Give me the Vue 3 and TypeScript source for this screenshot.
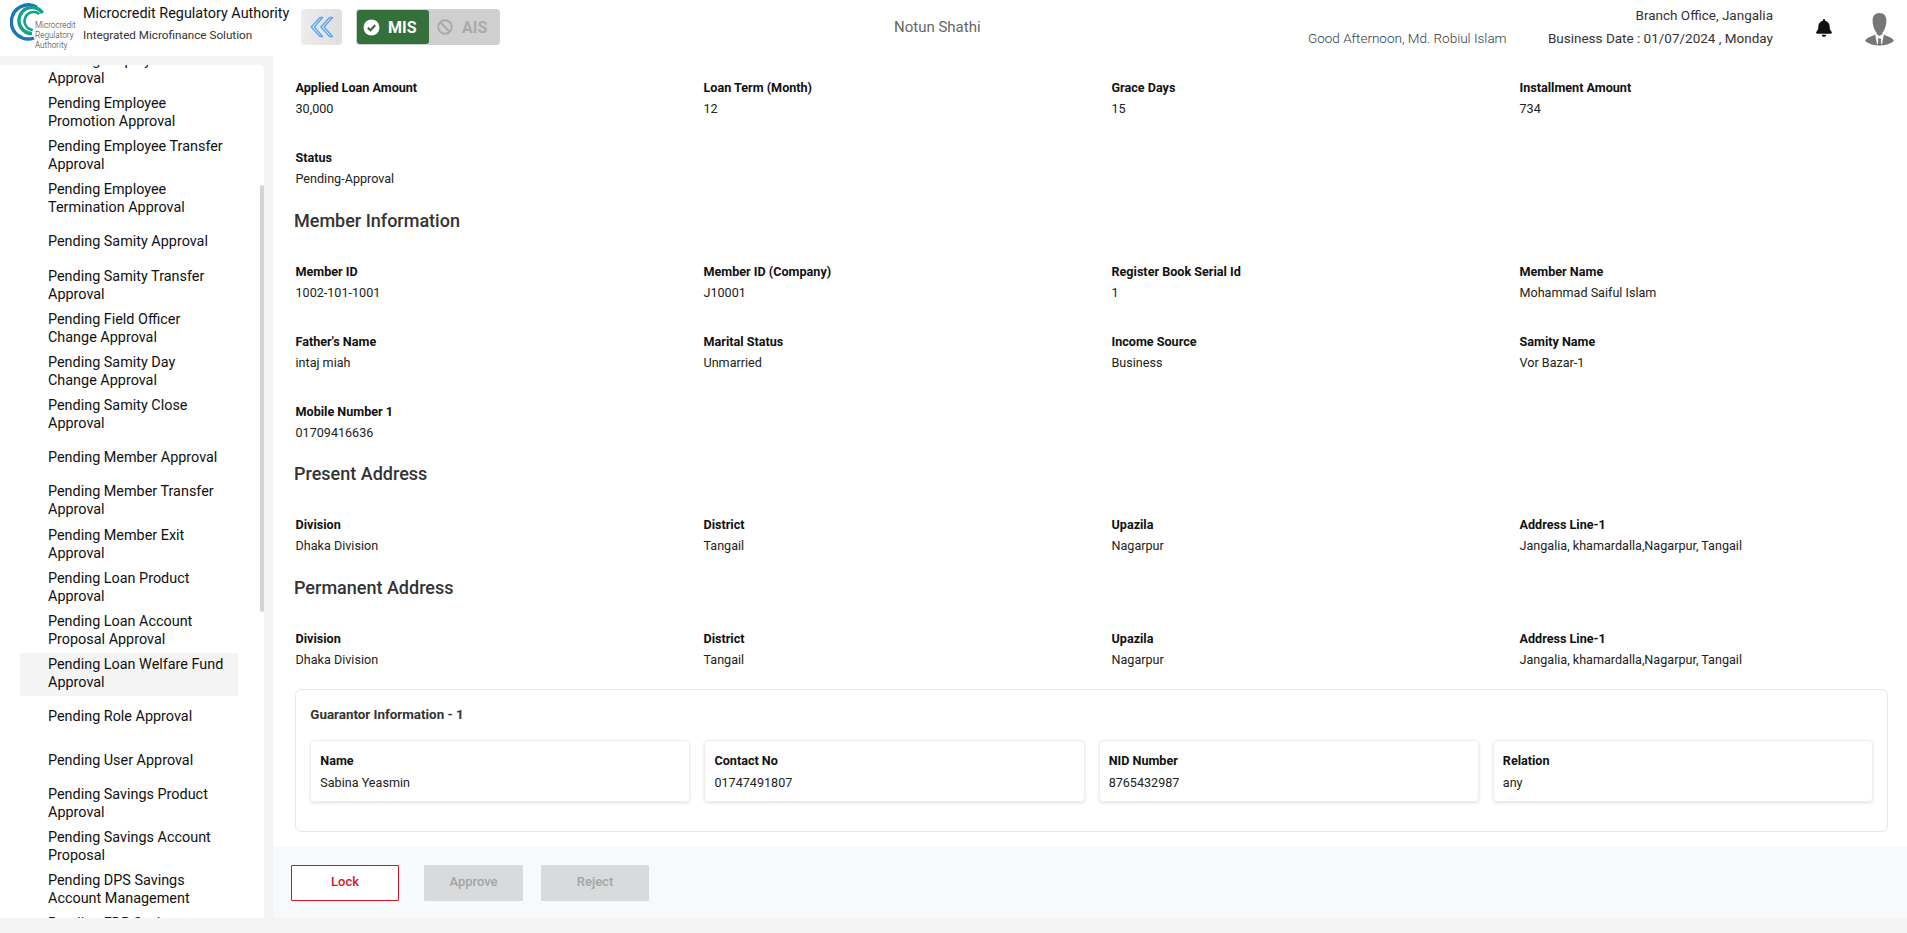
<script setup lang="ts">
interface Field { label: string; value: string }
interface Section { title?: string; rows: Field[] }

const menu: string[][] = [
  ['Pending Employee', 'Approval'],
  ['Pending Employee', 'Promotion Approval'],
  ['Pending Employee Transfer', 'Approval'],
  ['Pending Employee', 'Termination Approval'],
  ['Pending Samity Approval'],
  ['Pending Samity Transfer', 'Approval'],
  ['Pending Field Officer', 'Change Approval'],
  ['Pending Samity Day', 'Change Approval'],
  ['Pending Samity Close', 'Approval'],
  ['Pending Member Approval'],
  ['Pending Member Transfer', 'Approval'],
  ['Pending Member Exit', 'Approval'],
  ['Pending Loan Product', 'Approval'],
  ['Pending Loan Account', 'Proposal Approval'],
  ['Pending Loan Welfare Fund', 'Approval'],
  ['Pending Role Approval'],
  ['Pending User Approval'],
  ['Pending Savings Product', 'Approval'],
  ['Pending Savings Account', 'Proposal'],
  ['Pending DPS Savings', 'Account Management'],
  ['Pending FDR Savings', 'Approval'],
]
const activeIndex = 14

const sections: Section[] = [
  {
    rows: [
      { label: 'Applied Loan Amount', value: '30,000' },
      { label: 'Loan Term (Month)', value: '12' },
      { label: 'Grace Days', value: '15' },
      { label: 'Installment Amount', value: '734' },
      { label: 'Status', value: 'Pending-Approval' },
    ],
  },
  {
    title: 'Member Information',
    rows: [
      { label: 'Member ID', value: '1002-101-1001' },
      { label: 'Member ID (Company)', value: 'J10001' },
      { label: 'Register Book Serial Id', value: '1' },
      { label: 'Member Name', value: 'Mohammad Saiful Islam' },
      { label: "Father's Name", value: 'intaj miah' },
      { label: 'Marital Status', value: 'Unmarried' },
      { label: 'Income Source', value: 'Business' },
      { label: 'Samity Name', value: 'Vor Bazar-1' },
      { label: 'Mobile Number 1', value: '01709416636' },
    ],
  },
  {
    title: 'Present Address',
    rows: [
      { label: 'Division', value: 'Dhaka Division' },
      { label: 'District', value: 'Tangail' },
      { label: 'Upazila', value: 'Nagarpur' },
      { label: 'Address Line-1', value: 'Jangalia, khamardalla,Nagarpur, Tangail' },
    ],
  },
  {
    title: 'Permanent Address',
    rows: [
      { label: 'Division', value: 'Dhaka Division' },
      { label: 'District', value: 'Tangail' },
      { label: 'Upazila', value: 'Nagarpur' },
      { label: 'Address Line-1', value: 'Jangalia, khamardalla,Nagarpur, Tangail' },
    ],
  },
]

const guarantor: Field[] = [
  { label: 'Name', value: 'Sabina Yeasmin' },
  { label: 'Contact No', value: '01747491807' },
  { label: 'NID Number', value: '8765432987' },
  { label: 'Relation', value: 'any' },
]
</script>

<template>
  <div class="page">
    <header class="topbar">
      <div class="brand">
        <svg class="logo" width="66" height="50" viewBox="0 0 66 50">
          <path d="M27 5.300A17 17 0 1 0 24 36" fill="none" stroke="#1b75bb" stroke-width="3.400" />
          <path d="M32.600 11A13 13 0 1 0 22 31.500" fill="none" stroke="#12a38c" stroke-width="3.500" />
          <path d="M29.300 12.100A9 9 0 1 0 22.700 28" fill="none" stroke="#12a38c" stroke-width="2.600" />
          <text x="25" y="25.500" class="logo-text">Microcredit</text>
          <text x="25" y="35.500" class="logo-text">Regulatory</text>
          <text x="25" y="45.500" class="logo-text">Authority</text>
        </svg>
        <div class="brand-text">
          <div class="brand-title">Microcredit Regulatory Authority</div>
          <div class="brand-sub">Integrated Microfinance Solution</div>
        </div>
      </div>

      <button class="collapse" type="button" aria-label="Collapse menu">
        <svg width="24" height="22" viewBox="0 0 24 22" fill="none" stroke="#5ba4f4" stroke-width="1.300" stroke-linejoin="round">
          <path d="M10 1.500 1.200 11 10 20.500h2.600L4.400 11l8.200-9.500z" />
          <path d="M19.600 1.500 10.800 11l8.800 9.500h3L14 11l8.600-9.500z" />
        </svg>
      </button>

      <div class="switch">
        <div class="switch-on">
          <svg width="17" height="17" viewBox="0 0 17 17">
            <circle cx="8.500" cy="8.500" r="8" fill="#fff" />
            <path d="M4.800 8.800 7.400 11.300 12.200 6.200" fill="none" stroke="#33703a" stroke-width="2.200" />
          </svg>
          <span>MIS</span>
        </div>
        <div class="switch-off">
          <svg width="16" height="16" viewBox="0 0 16 16" fill="none" stroke="#aaa" stroke-width="2">
            <circle cx="8" cy="8" r="6.800" />
            <path d="M3.300 3.300 12.700 12.700" />
          </svg>
          <span>AIS</span>
        </div>
      </div>

      <div class="org">Notun Shathi</div>
      <div class="greeting">Good Afternoon, Md. Robiul Islam</div>
      <div class="office">
        <div>Branch Office, Jangalia</div>
        <div>Business Date : 01/07/2024 , Monday</div>
      </div>

      <svg class="bell" width="16" height="18" viewBox="0 0 448 512">
        <path fill="#111" d="M224 512c35.320 0 63.970-28.650 63.970-64H160.030c0 35.350 28.650 64 63.970 64zm215.390-149.710c-19.320-20.760-55.470-51.990-55.470-154.290 0-77.700-54.480-139.900-127.940-155.160V32c0-17.670-14.320-32-31.980-32s-31.980 14.330-31.980 32v20.840C118.560 68.100 64.080 130.300 64.080 208c0 102.300-36.150 133.530-55.470 154.290-6 6.450-8.660 14.160-8.610 21.710.11 16.400 12.980 32 32.100 32h383.800c19.120 0 32-15.600 32.100-32 .05-7.550-2.610-15.270-8.610-21.710z" />
      </svg>
      <svg class="avatar" width="29" height="33" viewBox="0 0 29 33">
        <path fill="#777" d="M14.500 0C10 0 7.600 3 7.600 7.500c0 3 .6 5.400 1.400 7.600.7 2 1.700 3.600 2.600 4.600v1.200L14.500 23l2.900-2.100v-1.200c.9-1 1.900-2.600 2.600-4.600.8-2.200 1.400-4.600 1.400-7.600C21.400 3 19 0 14.500 0z" />
        <path fill="#777" d="M10.500 21.500 3.500 24.500C1.800 25.300.7 26.500 0 28c4 3 9 4.600 14.500 4.600S25 31 29 28c-.7-1.500-1.800-2.700-3.500-3.500l-7-3-4 5z" />
        <path fill="#fff" d="M11 21.300 14.500 25l3.500-3.700.8.400-1.800 9.500h-5l-1.800-9.500z" />
        <path fill="#777" d="M13.300 25.500h2.400l.6 1-.6 1 .7 4.200-1.900.9-1.900-.9.700-4.200-.6-1z" />
      </svg>
    </header>

    <div class="body">
      <aside class="side">
        <div class="side-card">
          <ul class="menu">
            <li v-for="(item, i) in menu" :key="i" class="menu-item" :class="{ active: i === activeIndex }">
              <span v-for="line in item" :key="line" class="menu-line">{{ line }}</span>
            </li>
          </ul>
          <div class="thumb"></div>
        </div>
      </aside>

      <main class="main">
        <div class="content">
          <section v-for="(section, s) in sections" :key="s" class="section">
            <h2 v-if="section.title" class="section-title">{{ section.title }}</h2>
            <div class="grid">
              <div v-for="field in section.rows" :key="field.label" class="field">
                <div class="label">{{ field.label }}</div>
                <div class="value">{{ field.value }}</div>
              </div>
            </div>
          </section>

          <section class="guarantor">
            <h3 class="guarantor-title">Guarantor Information - 1</h3>
            <div class="guarantor-grid">
              <div v-for="field in guarantor" :key="field.label" class="guarantor-card">
                <div class="label">{{ field.label }}</div>
                <div class="value">{{ field.value }}</div>
              </div>
            </div>
          </section>
        </div>

        <footer class="actions">
          <button class="btn btn-lock" type="button">Lock</button>
          <button class="btn btn-approve" type="button" disabled>Approve</button>
          <button class="btn btn-reject" type="button" disabled>Reject</button>
        </footer>
      </main>
    </div>
  </div>
</template>

<style>
html, body { margin: 0; background: #f4f4f4; }
</style>

<style scoped>
.page {
  width: 1907px;
  height: 933px;
  overflow: hidden;
  display: flex;
  flex-direction: column;
  background: #f4f4f4;
  font-family: Roboto, "Liberation Sans", sans-serif;
  color: #111;
}
.topbar {
  height: 56px;
  flex: none;
  background: #fff;
  display: flex;
  align-items: flex-start;
  position: relative;
}
.brand { display: flex; width: 301px; flex: none; }
.logo { margin: 2px 0 0 10px; flex: none; }
.logo-text { font-family: Roboto, sans-serif; font-size: 8.200px; font-weight: 300; fill: #333; }
.brand-text { margin-left: 7px; }
.brand-title { font-size: 14.400px; line-height: 18px; margin-top: 5px; color: #111; white-space: nowrap; }
.brand-sub { font-size: 11.700px; line-height: 16px; margin-top: 4px; color: #333; white-space: nowrap; }
.collapse {
  width: 41px;
  height: 36px;
  margin-top: 9px;
  padding: 0;
  border: 0;
  border-radius: 4px;
  background: linear-gradient(90deg, #ececec, #dfdfdf);
  display: flex;
  align-items: center;
  justify-content: center;
  flex: none;
}
.switch {
  margin: 9px 0 0 14px;
  width: 144px;
  height: 36px;
  box-sizing: border-box;
  padding: 1px;
  border-radius: 4px;
  background: #cfcfcf;
  display: flex;
  flex: none;
}
.switch-on {
  width: 72px;
  background: #33703a;
  border-radius: 3px;
  color: #fff;
  font-size: 16px;
  font-weight: 700;
  display: flex;
  align-items: center;
  gap: 8px;
  padding-left: 6px;
  box-sizing: border-box;
}
.switch-off {
  flex: 1;
  color: #aaa;
  font-size: 16px;
  font-weight: 700;
  display: flex;
  align-items: center;
  gap: 9px;
  padding-left: 8px;
}
.org {
  margin-left: 394px;
  margin-top: 18px;
  font-size: 15px;
  line-height: 18px;
  color: #666;
  white-space: nowrap;
  flex: none;
}
.greeting {
  position: absolute;
  left: 1308px;
  top: 29px;
  font-size: 13.500px;
  line-height: 18px;
  font-weight: 300;
  color: #2f3a4a;
  white-space: nowrap;
}
.office {
  position: absolute;
  right: 134px;
  top: 6px;
  text-align: right;
  font-size: 13.500px;
  line-height: 18px;
  color: #333;
  white-space: nowrap;
}
.office div + div { margin-top: 5px; }
.bell { position: absolute; left: 1816px; top: 19px; }
.avatar { position: absolute; left: 1865px; top: 13px; }

.body { height: 862px; flex: none; display: flex; }
.side { width: 273px; flex: none; background: #f4f4f4; padding-top: 9px; box-sizing: border-box; }
.side-card {
  width: 264px;
  height: 853px;
  background: #fff;
  border-radius: 0 5px 0 0;
  overflow: hidden;
  position: relative;
}
.menu { list-style: none; margin: -17px 0 0; padding: 0 0 0 20px; width: 218px; }
.menu-item {
  height: 43.200px;
  box-sizing: border-box;
  padding-left: 28px;
  display: flex;
  flex-direction: column;
  justify-content: center;
  font-size: 14.400px;
  line-height: 18px;
  color: #111;
}
.menu-item.active { background: #f4f4f4; }
.menu-line { display: block; white-space: nowrap; }
.thumb {
  position: absolute;
  left: 260px;
  top: 120px;
  width: 4px;
  height: 427px;
  border-radius: 2px;
  background: #d4d4d4;
}

.main { flex: 1; min-width: 0; height: 862px; background: #fff; display: flex; flex-direction: column; }
.content { flex: 1; padding: 23px 19px 0 22.500px; box-sizing: border-box; }
.section-title {
  margin: 20.500px 0 30px -1.500px;
  font-size: 18px;
  line-height: 24px;
  font-weight: 500;
  color: #333;
}
.grid {
  display: grid;
  grid-template-columns: repeat(3, 408px) 1fr;
  row-gap: 31px;
}
.label { font-size: 12.600px; line-height: 18px; font-weight: 700; color: #111; white-space: nowrap; }
.value { font-size: 12.600px; line-height: 18px; margin-top: 3px; color: #222; white-space: nowrap; }

.guarantor {
  margin: 20.500px 0 0 -0.500px;
  height: 143px;
  box-sizing: border-box;
  border: 1px solid #e8e8e8;
  border-radius: 6px;
  padding: 0 14px 0 14.300px;
}
.guarantor-title {
  margin: 15.700px 0 0;
  font-size: 13.400px;
  line-height: 18px;
  font-weight: 700;
  color: #333;
}
.guarantor-grid {
  margin-top: 16.600px;
  display: grid;
  grid-template-columns: repeat(4, 1fr);
  gap: 14px;
}
.guarantor-card {
  height: 62px;
  box-sizing: border-box;
  padding: 10.400px 9px 0;
  border-radius: 4px;
  border: 1px solid #eee;
  box-shadow: 0 1px 3px rgba(0, 0, 0, 0.12);
}
.guarantor-card .value { margin-top: 4.200px; }
.actions {
  height: 71px;
  flex: none;
  background: #f7f9fa;
  display: flex;
  align-items: flex-start;
  padding: 18px 0 0 18px;
  box-sizing: border-box;
}
.btn {
  height: 36px;
  font-family: inherit;
  font-size: 13px;
  font-weight: 500;
  border-radius: 1px;
  padding: 0 0 3px;
}
.btn-lock { width: 108px; background: #fff; border: 1px solid #d9112b; color: #d9112b; }
.btn-approve { width: 99px; margin-left: 25px; background: #d9dadb; border: 0; color: #a2a4a6; }
.btn-reject { width: 108px; margin-left: 18px; background: #d9dadb; border: 0; color: #a2a4a6; }
</style>
